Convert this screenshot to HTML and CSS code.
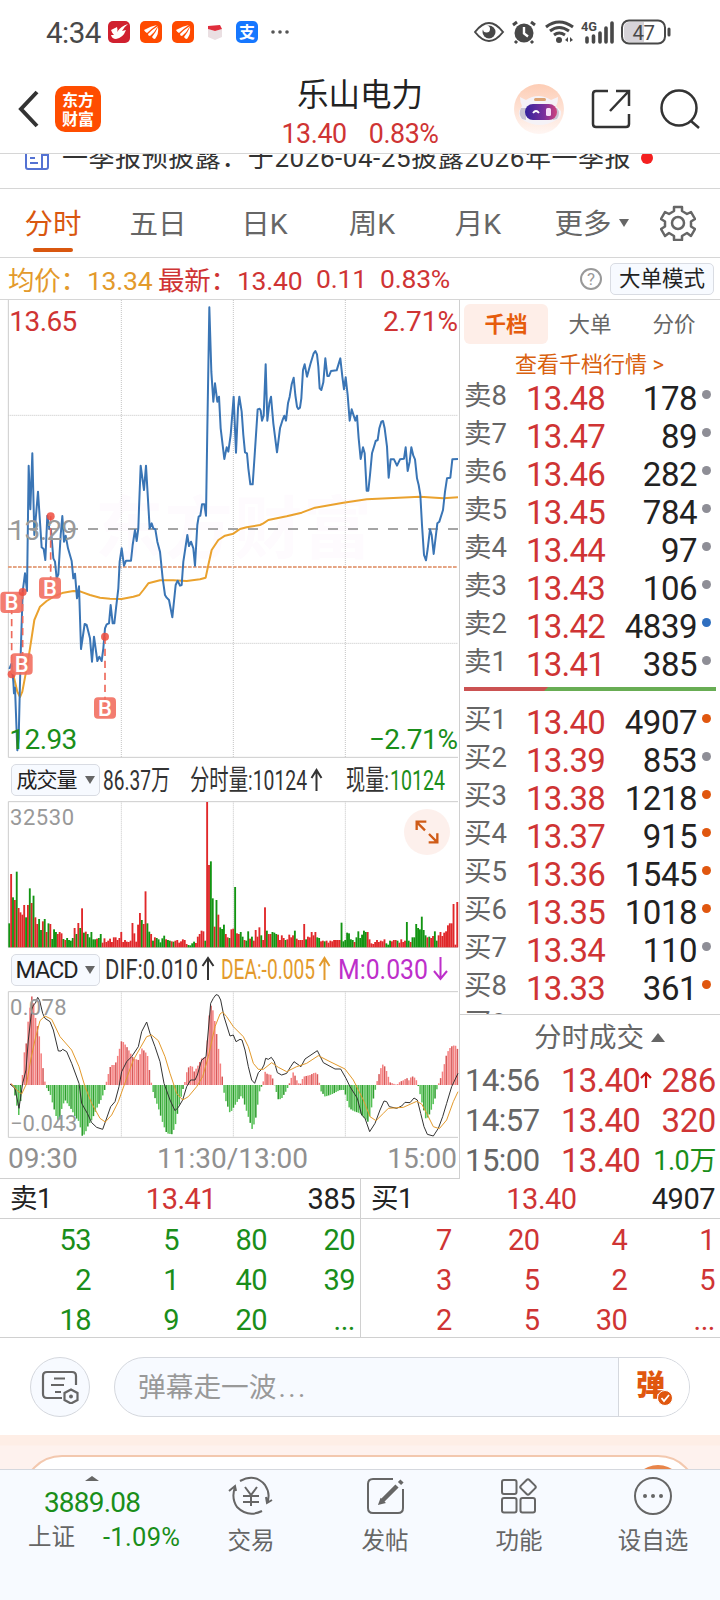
FILE: index.html
```html
<!DOCTYPE html>
<html lang="zh-CN">

<head>
    <meta charset="UTF-8">
    <meta name="viewport" content="width=device-width, initial-scale=1.0">
    <title>乐山电力</title>
    <link rel="stylesheet" href="styles.css">
</head>

<body>
    <div class="page">
        <div class="status">
            <span class="clock">4:34</span>
            <svg class="apps" width="182" height="24" viewBox="0 0 182 24">
                <rect x="0" y="1" width="22" height="22" rx="5" fill="#d0202f" />
                <path d="M3 10l6-3q1 3 0 5 4-6 11-8-4 3-6 7l4-1q-3 8-10 9-4 0-5-4l3 0q-2-2-3-5z" fill="#fff" />
                <rect x="32" y="1" width="22" height="22" rx="5" fill="#ff4a00" />
                <path d="M36 10q7-4 13-5-6 4-10 8-2-1-3-3zM40 14q5-5 10-8-3 6-8 10-2 0-2-2zM44 17q4-5 6-10 1 7-3 12-2 0-3-2z" fill="#fff" />
                <rect x="64" y="1" width="22" height="22" rx="5" fill="#ff4a00" />
                <path d="M68 10q7-4 13-5-6 4-10 8-2-1-3-3zM72 14q5-5 10-8-3 6-8 10-2 0-2-2zM76 17q4-5 6-10 1 7-3 12-2 0-3-2z" fill="#fff" />
                <path d="M100 9l7 2 7-2v8l-7 3-7-3z" fill="#eadfe2" />
                <path d="M100 6l12-1 2 4-7 2-7-2z" fill="#e02d3c" />
                <rect x="128" y="1" width="22" height="22" rx="5" fill="#1677ff" />
                <text x="139" y="18" text-anchor="middle" font-size="16" font-weight="700" fill="#fff">支</text>
                <g fill="#555">
                    <circle cx="165" cy="12" r="1.8" />
                    <circle cx="172" cy="12" r="1.8" />
                    <circle cx="179" cy="12" r="1.8" />
                </g>
            </svg>
            <svg class="signals" width="198" height="26" viewBox="0 0 198 26">
                <g fill="none" stroke="#484848" stroke-width="2">
                    <path d="M1 13Q8 4 15 4t14 9q-7 9-14 9T1 13z" />
                    <path d="M72 8q13-10 27 0M76 12q9-7 19 0M80 16q5-4 11 0" stroke-width="3" />
                    <rect x="148" y="1.500" width="43" height="23" rx="7" />
                </g>
                <circle cx="15" cy="13" r="6.500" fill="#484848" />
                <circle cx="12.500" cy="10" r="3.500" fill="#fff" />
                <circle cx="50" cy="14" r="9.500" fill="#484848" />
                <path d="M50 8v6.500l4 3" fill="none" stroke="#fff" stroke-width="2.400" />
                <path d="M39 6l4-3M57 3l4 3M43 22l-2 2M57 22l2 2" stroke="#484848" stroke-width="3" />
                <circle cx="85" cy="21" r="3" fill="#484848" />
                <path d="M91 21l3-3v5zM99 21l-3-3v5z" fill="#484848" />
                <text x="107" y="12" font-size="12.500" font-weight="700" textLength="16" lengthAdjust="spacingAndGlyphs" fill="#484848">4G</text>
                <path d="M113 23v-4M119.500 23v-6M126 23V14M132 23V9M138 23V4" stroke="#484848" stroke-width="3.600" stroke-linecap="round" />
                <path d="M155 3h15v20h-15q-5 0-5-6V9q0-6 5-6z" fill="#d6d3d8" />
                <text x="169.500" y="20.500" text-anchor="middle" font-size="20.500" letter-spacing="-.5" fill="#484848">47</text>
                <path d="M195 10v6" stroke="#484848" stroke-width="3" stroke-linecap="round" />
            </svg>
        </div>

        <div class="header">
            <svg class="back" width="22" height="38" viewBox="0 0 22 38">
                <path d="M20 2L4 19l16 17" fill="none" stroke="#333" stroke-width="4" />
            </svg>
            <div class="logo">东方<br>财富</div>
            <div class="title">
                <h1>乐山电力</h1>
                <p><span>13.40</span><span>0.83%</span></p>
            </div>
            <svg class="robot" width="50" height="50" viewBox="0 0 50 50">
                <defs>
                    <linearGradient id="halo" x1="0" y1="0" x2="0" y2="1">
                        <stop offset="0" stop-color="#fdcdb5" />
                        <stop offset="1" stop-color="#fff6f3" />
                    </linearGradient>
                    <linearGradient id="visor">
                        <stop offset="0" stop-color="#33229c" />
                        <stop offset=".6" stop-color="#7a2f9c" />
                        <stop offset="1" stop-color="#d0447c" />
                    </linearGradient>
                </defs>
                <circle cx="25" cy="25" r="25" fill="url(#halo)" />
                <path d="M6 13l6 3q12-8 25 0l7-3q0 6-2 9l5 5q1 7-5 9-16 10-33 0-5-2-4-9l3-5q-2-4-2-9z" fill="#f5f2f7" />
                <path d="M7 24q-3 6 1 11l4 1V24zM43 24q4 5 0 11l-4 1V24z" fill="#c9c4d2" />
                <rect x="20" y="14" width="12" height="3" rx="1.500" fill="#dba271" />
                <rect x="11" y="20" width="32" height="16" rx="8" fill="url(#visor)" />
                <path d="M19 29q3-4 6 0" fill="none" stroke="#fff" stroke-width="1.800" />
                <rect x="32" y="24" width="5" height="8" rx="1.500" fill="#f6dcf8" />
            </svg>
            <svg class="share" width="42" height="42" viewBox="0 0 42 42">
                <path d="M18 3H6Q3 3 3 6v30q0 3 3 3h30q3 0 3-3V26M20 23L38 4M26 3h13v15" fill="none" stroke="#333" stroke-width="2.500" />
            </svg>
            <svg class="search" width="42" height="42" viewBox="0 0 42 42">
                <g fill="none" stroke="#333" stroke-width="2.500">
                    <circle cx="20" cy="20" r="17.500" />
                    <path d="M32 33l8 7" />
                </g>
            </svg>
        </div>

        <div class="notice">
            <svg width="24" height="24" viewBox="0 0 24 24" fill="none" stroke="#5472d3" stroke-width="2">
                <path d="M1 1h16v22H3q-2 0-2-2zM17 9h6v12q0 2-2 2h-4M5 7h8M5 12h5M5 17h8" />
            </svg>
            <span>一季报预披露：于2026-04-25披露2026年一季报</span>
            <i></i>
        </div>

        <div class="tabs">
            <a class="active">分时</a>
            <a>五日</a>
            <a>日K</a>
            <a>周K</a>
            <a>月K</a>
            <a>更多<i class="down"></i></a>
            <svg width="36" height="36" viewBox="-18 -18 36 36" fill="none" stroke="#666" stroke-width="2.500" stroke-linejoin="round">
                <path d="M-4-16h8v4l5 3 4-2 4 7-4 2.500v5L17 6l-4 7-4-3-5 3v4h-8v-4l-5-3-4 3-4-7 4-2.500v-5L-17-4l4-7 4 2 5-3z" />
                <circle r="6" />
            </svg>
        </div>

        <div class="summary">
            <span class="avg">均价：13.34</span>
            <span class="last">最新：13.40</span>
            <span>0.11</span>
            <span>0.83%</span>
            <b class="help">?</b>
            <button>大单模式</button>
        </div>

        <div class="main">
            <div class="charts">
                <svg id="price" width="459" height="458" viewBox="0 15 1377 1374">
                    <text x="285" y="775" font-size="205" font-weight="700" textLength="830" fill="#fefbfe">东方财富</text>
                    <path class="grid" d="M364 15V1387M700 15V1387M1036 15V1387M25 361H1374M25 1045H1374" />
                    <path d="M25 15V1387H1374" class="frame" />
                    <path d="M24 702H1374" stroke="#888" stroke-width="5" stroke-dasharray="30" />
                    <path d="M24 816H1374" stroke="#e5a584" stroke-width="6" stroke-dasharray="11 4" />
                    <polyline class="avg-line" />
                    <polyline class="price-line" />
                    <g class="marks"></g>
                    <g font-size="84">
                        <text x="28" y="107" textLength="204" fill="#cf3434">13.65</text>
                        <text x="1374" y="107" text-anchor="end" fill="#cf3434">2.71%</text>
                        <text x="28" y="735" textLength="204" fill="#999">13.29</text>
                        <text x="28" y="1361" textLength="204" fill="#1a8e1a">12.93</text>
                        <text x="1374" y="1361" text-anchor="end" textLength="268" fill="#1a8e1a">−2.71%</text>
                    </g>
                </svg>
                <div class="index">
                    <button>成交量<i class="down"></i></button>
                    <svg width="359" height="43" viewBox="100 758 359 43" font-size="28" fill="#333">
                        <text x="103" y="790" textLength="67" lengthAdjust="spacingAndGlyphs">86.37万</text>
                        <text x="190" y="790" textLength="117" lengthAdjust="spacingAndGlyphs">分时量:10124</text>
                        <path class="arrow" d="M316.500 791v-21M311.500 778l5-8 5 8" />
                        <text x="346" y="790" textLength="43" lengthAdjust="spacingAndGlyphs">现量:</text>
                        <text x="390" y="790" textLength="55" lengthAdjust="spacingAndGlyphs" fill="#1a8e1a">10124</text>
                    </svg>
                </div>
                <svg id="volume" width="459" height="147" viewBox="0 153 1377 441">
                    <path class="grid" d="M364 154V592M700 154V592M1036 154V592" />
                    <path class="frame" d="M1374 155H25V592H1374" />
                    <g class="bars"></g>
                    <text x="30" y="225" font-size="66" textLength="192" fill="#999">32530</text>
                    <circle cx="1281" cy="246" r="69" fill="#fdf0ec" />
                    <path d="M1275 241l-24-24M1250 240v-25h29M1287 252l25 25M1286 277h26v-27" fill="none" stroke="#cf5b17" stroke-width="7" />
                </svg>
                <div class="index">
                    <button class="latin">MACD<i class="down"></i></button>
                    <svg width="359" height="43" viewBox="100 948 359 43" font-size="28" fill="#333">
                        <text x="105" y="979" textLength="93" lengthAdjust="spacingAndGlyphs">DIF:0.010</text>
                        <path class="arrow" d="M208 980v-22M202.500 966l5.500-8 5.500 8" />
                        <text x="221" y="979" textLength="94" lengthAdjust="spacingAndGlyphs" fill="#e39a2c">DEA:-0.005</text>
                        <path class="arrow dea-arrow" d="M324.500 980v-22M319.500 966l5-8 5 8" />
                        <text x="338" y="979" textLength="90" lengthAdjust="spacingAndGlyphs" fill="#bd2fca">M:0.030</text>
                        <path class="arrow m-arrow" d="M440.500 957v22M434 971l6.500 8 6.500-8" />
                    </svg>
                </div>
                <svg id="macd" width="459" height="147" viewBox="0 723 1377 441">
                    <path class="grid" d="M364 724V1162M700 724V1162M1036 724V1162" />
                    <path class="frame" d="M1374 725H25V1162H1374" />
                    <g class="bars"></g>
                    <polyline class="dif" />
                    <polyline class="dea" />
                    <text x="30" y="795" font-size="66" textLength="170" fill="#999">0.078</text>
                    <text x="30" y="1143" font-size="66" textLength="202" fill="#999">−0.043</text>
                </svg>
                <div class="times"><span>09:30</span><span>11:30/13:00</span><span>15:00</span></div>
            </div>

            <div class="side">
                <div class="side-tabs"><a class="active">千档</a><a>大单</a><a>分价</a></div>
                <a class="more">查看千档行情 &gt;</a>
                <div class="book">
                    <div class="asks"></div>
                    <div class="ratio"></div>
                    <div class="bids"></div>
                </div>
                <div class="deals">
                    <h2>分时成交<i class="up"></i></h2>
                    <p><span>14:56</span><b>13.40</b><svg width="12" height="18" viewBox="0 0 12 18"><path d="M6 17V2M1 7l5-5 5 5" fill="none" stroke="#c81414" stroke-width="2.200" /></svg><em>286</em></p>
                    <p><span>14:57</span><b>13.40</b><em>320</em></p>
                    <p><span>15:00</span><b>13.40</b><em class="green">1.0万</em></p>
                </div>
            </div>
        </div>

        <div class="queues">
            <div class="queue sell">
                <p><span>卖1</span><b>13.41</b><em>385</em></p>
                <div class="lots">
                    <span>53</span><span>5</span><span>80</span><span>20</span>
                    <span>2</span><span>1</span><span>40</span><span>39</span>
                    <span>18</span><span>9</span><span>20</span><span>...</span>
                </div>
            </div>
            <div class="queue buy">
                <p><span>买1</span><b>13.40</b><em>4907</em></p>
                <div class="lots">
                    <span>7</span><span>20</span><span>4</span><span>1</span>
                    <span>3</span><span>5</span><span>2</span><span>5</span>
                    <span>2</span><span>5</span><span>30</span><span>...</span>
                </div>
            </div>
        </div>

        <div class="barrage">
            <div class="setting">
                <svg width="38" height="34" viewBox="0 0 38 34" fill="none" stroke="#666" stroke-width="2.200">
                    <path d="M21 28H6q-4 0-4-4V6q0-4 4-4h25q4 0 4 4v9M13 8.500h11M10 15h13M14 22h6" />
                    <path d="M30 19.500l6.500 3.500v7L30 33.500 23.500 30v-7z" />
                    <circle cx="30" cy="26.500" r="1.200" fill="#666" stroke-width="1.500" />
                </svg>
            </div>
            <div class="input">
                <span>弹幕走一波<i>...</i></span>
                <div class="send">弹
                    <svg width="16" height="16" viewBox="0 0 16 16">
                        <circle cx="8" cy="8" r="7.500" fill="#e0570f" stroke="#fff" />
                        <path d="M4.500 8l2.500 3 5-6" fill="none" stroke="#fff" stroke-width="1.800" />
                    </svg>
                </div>
            </div>
        </div>

        <div class="promo">
            <div class="card"><i></i></div>
        </div>

        <div class="nav">
            <div class="market">
                <i class="up"></i>
                <b>3889.08</b>
                <p><span>上证</span><em>-1.09%</em></p>
            </div>
            <a>
                <svg width="46" height="42" viewBox="0 0 46 42" fill="none" stroke="#666" stroke-width="2">
                    <path d="M12 6q15-8 25 4 6 9 2 18M34 36q-14 7-25-4-6-9-2-20M1 16l6-5 1 5M38 22l1 6 5-3" />
                    <path d="M17 12l6 8 6-8M15 21h16M15 27h16M23 20v11" />
                </svg>
                交易
            </a>
            <a>
                <svg width="42" height="42" viewBox="0 0 42 42" fill="none" stroke="#666" stroke-width="2">
                    <path d="M29 4H9q-5 0-5 5v24q0 5 5 5h25q5 0 5-5V14" />
                    <path d="M18 26l15-15M35.500 8.500L38 6" stroke-width="4.500" />
                    <path d="M15.500 28.500l1.500-4 3 3z" fill="#666" />
                </svg>
                发帖
            </a>
            <a>
                <svg width="42" height="42" viewBox="0 0 42 42" fill="none" stroke="#666" stroke-width="2">
                    <rect x="4" y="5" width="14.500" height="14" rx="2" />
                    <rect x="4" y="23" width="14.500" height="14.500" rx="2" />
                    <rect x="22.500" y="23" width="14.500" height="14.500" rx="2" />
                    <rect x="24" y="6" width="12" height="12" rx="2" transform="rotate(45 30 12)" />
                </svg>
                功能
            </a>
            <a>
                <svg width="42" height="42" viewBox="0 0 42 42" fill="none" stroke="#666" stroke-width="2">
                    <circle cx="21" cy="21" r="18" />
                    <path d="M13 21h.01M21 21h.01M29 21h.01" stroke-width="4" stroke-linecap="round" />
                </svg>
                设自选
            </a>
        </div>
    </div>

    <script src="chart.js"></script>
</body>

</html>
```
FILE: styles.css
```css
* {
    padding: 0;
    margin: 0;
    box-sizing: border-box;
}

body {
    font-family: Roboto, "Noto Sans CJK SC", sans-serif;
    color: #333;
    background: #fff;
}

svg {
    display: block;
    flex: none;
}

svg text {
    font-family: Roboto, "Noto Sans CJK SC", sans-serif;
}

b,
em,
i,
h1,
h2 {
    font-weight: 400;
    font-style: normal;
}

.page {
    width: 720px;
    height: 1600px;
    overflow: hidden;
    white-space: nowrap;
}

.down,
.up {
    display: inline-block;
    border: 5px solid transparent;
    border-top: 8px solid #666;
    border-bottom: 0;
}

.up {
    border: 7px solid transparent;
    border-bottom: 9px solid #666;
    border-top: 0;
}

.status {
    height: 64px;
    display: flex;
    align-items: center;
    padding-left: 46px;
}

.status .clock {
    flex: none;
    width: 62px;
    font-size: 29.5px;
    letter-spacing: -.5px;
    color: #484848;
    padding-top: 1px;
}

.status .signals {
    margin-left: 184px;
}

/* header */
.header {
    height: 90px;
    border-bottom: 1px solid #d6d6d6;
    display: flex;
    align-items: center;
    padding-left: 17px;
}

.header .logo {
    width: 46px;
    height: 46px;
    margin-left: 16px;
    border-radius: 10px;
    background: #ff4d00;
    color: #fff;
    font: 700 16px/19px "Noto Sans CJK SC", sans-serif;
    text-align: center;
    padding-top: 4px;
}

.header .title {
    width: 160px;
    margin-left: 179px;
    text-align: center;
}

.header h1 {
    font-size: 31.5px;
    line-height: 42px;
    color: #222;
    padding-top: 8px;
}

.header p {
    display: flex;
    justify-content: center;
    gap: 22px;
    font-size: 26.8px;
    line-height: 34px;
    letter-spacing: -.4px;
    color: #cf3434;
}

.header .robot {
    margin-left: 74px;
}

.header .share {
    margin-left: 26px;
}

.header .search {
    margin-left: 27px;
}

.notice {
    height: 35px;
    overflow: hidden;
    border-bottom: 1px solid #d6d6d6;
    display: flex;
    align-items: flex-start;
    padding-left: 25px;
}

.notice svg {
    margin-top: -8px;
}

.notice span {
    font-size: 26px;
    line-height: 38px;
    margin: -15px 0 0 13px;
    letter-spacing: .55px;
}

.notice i {
    width: 12px;
    height: 12px;
    margin: -2px 0 0 10px;
    border-radius: 50%;
    background: #f42020;
}

.tabs {
    height: 69px;
    border-bottom: 1px solid #d6d6d6;
    display: grid;
    grid-template-columns: 106px 104px 109px 106px 106px 104px 85px;
    place-items: center;
    font-size: 28.5px;
    color: #666;
}

.tabs a {
    height: 68px;
    line-height: 72px;
    position: relative;
}

.tabs a.active {
    color: #d9570f;
}

.tabs a.active::after {
    content: '';
    position: absolute;
    left: 9px;
    bottom: 5px;
    width: 40px;
    height: 4px;
    border-radius: 2px;
    background: #d9570f;
}

.tabs .down {
    position: absolute;
    left: 65px;
    top: 30px;
}

.summary {
    height: 42px;
    border-bottom: 1px solid #d6d6d6;
    display: flex;
    align-items: center;
    padding: 0 6px 0 8px;
    font-size: 26.5px;
    letter-spacing: -.2px;
    color: #cf3434;
}

.summary .avg {
    color: #e39a2c;
    width: 150px;
}

.summary .last {
    width: 158px;
}

.summary span:nth-child(3) {
    width: 64px;
}

.summary .help {
    width: 22px;
    height: 22px;
    margin-left: auto;
    margin-right: 8px;
    border: 2px solid #999;
    border-radius: 50%;
    font-size: 17px;
    line-height: 18px;
    text-align: center;
    color: #999;
}

.summary button,
.index button {
    height: 32px;
    border: 1px solid #d9dce3;
    border-radius: 5px;
    background: #f7faff;
    font-family: inherit;
    color: #222;
}

.summary button {
    width: 104px;
    font-size: 21.5px;
    line-height: 30px;
}

/* charts */
.main {
    height: 879px;
    display: flex;
    border-bottom: 1px solid #d0d0d0;
}

.charts {
    width: 459px;
}

.frame {
    fill: none;
    stroke: #ccc;
    stroke-width: 3;
}

.grid {
    fill: none;
    stroke: #c4c4c4;
    stroke-width: 3;
    stroke-dasharray: 3 3;
}

.charts polyline {
    fill: none;
    stroke-linejoin: round;
}

.price-line {
    stroke: #3a75b5;
    stroke-width: 6;
}

.avg-line {
    stroke: #eaa22e;
    stroke-width: 6;
}

.dif {
    stroke: #333;
    stroke-width: 3;
}

.dea {
    stroke: #e39a2c;
    stroke-width: 3;
}

.arrow {
    fill: none;
    stroke: #333;
    stroke-width: 2;
}

.dea-arrow {
    stroke: #e39a2c;
}

.m-arrow {
    stroke: #bd2fca;
}

.index {
    height: 43px;
    display: flex;
    align-items: center;
}

.index button {
    width: 89px;
    margin-left: 11px;
    font-size: 21px;
    line-height: 28px;
    letter-spacing: -1px;
    display: flex;
    align-items: center;
    justify-content: center;
    gap: 8px;
}

.index button.latin {
    font-size: 23.5px;
    letter-spacing: -1.2px;
}

.times {
    height: 40px;
    display: flex;
    justify-content: space-between;
    padding: 1px 2px 0 8px;
    font-size: 28px;
    line-height: 40px;
    color: #909090;
}

/* order book */
.side {
    flex: 1;
    border-left: 1px solid #d0d0d0;
    padding-left: 4px;
    color: #666;
}

.side-tabs {
    display: flex;
    margin-top: 4px;
    font-size: 21.5px;
    line-height: 42px;
    height: 40px;
    text-align: center;
}

.side-tabs a {
    width: 84px;
}

.side-tabs .active {
    border-radius: 6px;
    background: #feeee8;
    color: #e65c0c;
    font-weight: 700;
}

.more {
    display: block;
    margin-left: 51px;
    height: 34px;
    font-size: 22px;
    line-height: 42px;
    color: #d9610f;
}

.book {
    height: 636px;
    overflow: hidden;
}

.book p {
    height: 38px;
    display: flex;
    align-items: center;
    line-height: 38px;
    position: relative;
    top: 1px;
}

.book span {
    width: 62px;
    font-size: 27.5px;
    margin-top: -5px;
}

.book b,
.deals b {
    font-size: 33px;
    letter-spacing: -.8px;
    color: #cf3434;
    padding-top: 1px;
}

.book em {
    flex: 1;
    text-align: right;
    font-size: 33px;
    letter-spacing: -.5px;
    color: #222;
    padding-top: 1px;
}

.book i {
    width: 9px;
    height: 9px;
    margin: -7px 9px 0 5px;
    border-radius: 50%;
    background: #8e8e96;
}

.book i.blue {
    background: #2f6fc0;
}

.book i.orange {
    background: #e0570f;
}

.ratio {
    width: 252px;
    height: 4px;
    margin: 5px 0 11px;
    background: linear-gradient(135deg, #cb5252 59px, #68ad54 60px);
}

.deals {
    margin-left: -4px;
    border-top: 1px solid #d0d0d0;
    background: #fff;
}

.deals h2 {
    height: 45px;
    font-size: 27.5px;
    line-height: 45px;
    padding-left: 74px;
}

.deals .up {
    margin-left: 7px;
    vertical-align: 5px;
}

.deals p {
    height: 40px;
    line-height: 40px;
    display: flex;
    align-items: center;
    padding: 0 4px 0 5px;
}

.deals span {
    width: 96px;
    font-size: 31px;
    letter-spacing: -.5px;
    padding-top: 1px;
}

.deals em {
    margin-left: auto;
    font-size: 33px;
    letter-spacing: -.4px;
    color: #cf3434;
    padding-top: 1px;
}

.deals em.green {
    font-size: 27px;
    color: #1a8e1a;
}

/* queues */
.queues {
    height: 159px;
    display: flex;
    border-bottom: 1px solid #d0d0d0;
    font-size: 29px;
    letter-spacing: -.5px;
}

.queue {
    width: 360px;
}

.queue.buy {
    border-left: 1px solid #d0d0d0;
}

.queue p {
    height: 40px;
    line-height: 40px;
    border-bottom: 1px solid #d0d0d0;
    display: grid;
    grid-template-columns: 1fr 1fr 1fr;
    padding: 0 5px 0 10px;
    color: #222;
}

.queue p span {
    font-size: 27.5px;
}

.queue b {
    text-align: center;
    color: #cf3434;
    padding-right: 3px;
}

.queue em {
    text-align: right;
}

.lots {
    display: grid;
    grid-template-columns: repeat(4, 1fr);
    line-height: 40px;
    text-align: right;
    padding: 1px 5px 0 3px;
    color: #1a8e1a;
}

.buy .lots {
    color: #cf3434;
}

.barrage {
    height: 97px;
    display: flex;
    align-items: center;
    padding-left: 30px;
}

.setting {
    width: 60px;
    height: 60px;
    border: 1px solid #d5d8de;
    border-radius: 50%;
    background: #f7faff;
    display: flex;
    align-items: center;
    justify-content: center;
}

.input {
    width: 576px;
    height: 60px;
    margin-left: 24px;
    border: 1px solid #d5d8de;
    border-radius: 30px;
    background: #f7faff;
    overflow: hidden;
    display: flex;
    justify-content: space-between;
    padding-left: 23px;
    font-size: 27.7px;
    line-height: 60px;
    color: #999;
}

.input i {
    letter-spacing: 2.5px;
    padding-left: 2px;
}

.send {
    width: 71px;
    border-left: 1px solid #d5d8de;
    background: #fff;
    position: relative;
    padding-left: 17px;
    font-size: 29px;
    line-height: 57px;
    font-weight: 900;
    color: #e0570f;
}

.send svg {
    position: absolute;
    left: 38px;
    top: 32px;
}

.promo {
    height: 34px;
    overflow: hidden;
    padding: 20px 22px 0;
    background: linear-gradient(#feeee6 10px, #fef2ee 11px);
}

.card {
    height: 90px;
    border: 2px solid #f3c8ae;
    border-radius: 40px;
    background: #fff;
    overflow: hidden;
}

.card i {
    display: block;
    width: 52px;
    height: 52px;
    margin: 8px 12px 0 auto;
    border-radius: 50%;
    background: #e8854a;
}

.nav {
    height: 131px;
    border-top: 1px solid #d5d8de;
    background: #f7faff;
    display: flex;
    color: #666;
    font-size: 23.5px;
}

.nav a {
    width: 134px;
    display: flex;
    flex-direction: column;
    align-items: center;
    line-height: 34px;
    padding-top: 5px;
}

.nav a svg {
    margin-bottom: 7px;
}

.market {
    width: 184px;
    display: flex;
    flex-direction: column;
    align-items: center;
    color: #1a8e1a;
}

.market .up {
    margin-top: 6px;
    border-bottom-width: 5px;
}

.market b {
    font-size: 28px;
    line-height: 38px;
    letter-spacing: -.8px;
    margin-top: 3px;
}

.market p {
    width: 100%;
    display: flex;
    padding-left: 28px;
    line-height: 30px;
}

.market span {
    width: 75px;
    color: #666;
}

.market em {
    font-size: 25.5px;
    letter-spacing: .3px;
}
```
FILE: chart.js
```js
const $ = s => document.querySelector(s)

// chart coordinates are in thirds of a pixel
const STEP = 5.6
const START = 28

$('.price-line').setAttribute('points', `
28,1122 35,1105 40,1160 42,1195 45,1178 52,1366 56,1330 62,1080 68,890 75,835 81,888 86,512 91,643 97,475 103,720
114,590 125,757 131,762 136,795 142,662 148,700 153,705 160,790 165,800 170,850 175,838 182,720 187,663 192,740 197,722
204,760 215,798 220,850 225,836 231,910 237,874 243,1062 254,987 260,990 270,1030 276,1100 282,1025 292,1098 298,1085
305,1098 310,1060 315,1000 320,988 327,985 332,930 338,985 343,985 348,940 355,880 359,800 365,760 372,812 378,797
393,797 398,750 405,705 410,738 415,700 417,640 422,512 432,585 438,512 449,700 455,685 460,700 466,703 472,740
480,770 488,850 495,900 500,908 507,915 517,967 527,870 533,857 540,872 545,870 550,800 562,720 567,753 573,740
580,760 585,812 592,690 596,665 601,662 606,628 613,628 618,662 622,400 628,37 634,230 640,320 645,265 652,320
657,305 662,400 673,492 680,457 685,470 692,420 701,305 708,473 714,340 718,305 725,350 730,420 735,472 741,475
745,520 751,568 758,568 764,480 773,343 779,341 782,347 786,377 791,362 797,208 802,377 808,325 813,305 820,385
831,472 840,400 847,377 853,362 858,377 864,325 869,305 875,268 881,248 886,300 891,335 895,342 900,338 904,310
909,225 914,208 921,245 931,208 941,175 946,168 951,178 955,215 959,280 964,285 970,262 976,190 982,243 987,243
993,228 1010,226 1021,190 1027,245 1032,283 1037,247 1043,300 1049,377 1055,343 1066,377 1071,362 1076,430
1082,492 1089,457 1094,475 1100,587 1105,587 1110,540 1116,475 1122,455 1127,438 1133,435 1138,400 1144,380
1149,378 1154,400 1161,455 1166,548 1172,493 1182,493 1191,512 1200,493 1212,491 1217,457 1223,528 1229,500
1234,457 1240,482 1245,493 1251,550 1256,570 1261,600 1266,690 1272,780 1278,796 1283,762 1290,703 1295,720
1301,777 1306,735 1312,685 1318,680 1329,645 1335,590 1341,550 1351,548 1357,493 1374,492`)

$('.avg-line').setAttribute('points', `
40,1140 45,1160 52,1190 60,1206 67,1190 80,1120 90,1060 103,975 120,935 140,918 165,903 190,893 220,888 240,889
270,900 300,908 330,911 365,912 400,905 418,900 430,885 445,865 480,856 520,856 560,858 600,853 617,848 625,810
635,765 655,735 675,722 700,716 720,702 740,697 780,690 790,685 805,675 860,664 905,653 945,638 1030,623 1100,613
1180,609 1260,605 1330,610 1374,607`)

$('.dif').setAttribute('points', `
30,1002 45,1015 57,1075 68,1000 78,960 85,870 95,780 100,765 106,760 113,742 119,752 128,790 135,805 150,815 160,840
175,903 183,903 188,898 200,905 215,940 237,1000 245,1060 262,1090 275,1118 290,1132 308,1138 318,1110 332,1070
345,1055 357,1010 365,965 380,935 395,920 415,890 425,845 440,816 450,850 465,890 480,935 492,1000 510,1050 525,1082
535,1072 548,1050 560,1010 572,990 585,990 592,975 605,930 618,920 625,840 632,760 640,745 648,734 655,736 662,750
672,800 690,858 700,855 708,875 720,868 726,870 735,900 745,950 755,990 764,1000 775,968 785,958 792,945 797,925
805,928 814,922 823,935 832,968 845,975 860,970 872,950 882,935 903,950 915,927 952,902 970,938 1005,957 1022,957
1038,985 1050,1010 1072,1045 1085,1095 1095,1105 1109,1145 1125,1120 1140,1080 1152,1053 1160,1055 1168,1070
1190,1075 1205,1068 1215,1057 1230,1058 1242,1044 1252,1050 1262,1090 1272,1130 1282,1153 1300,1158 1315,1135
1328,1100 1340,1060 1355,1010 1374,970`)

$('.dea').setAttribute('points', `
35,1002 50,1020 65,1032 80,1000 92,930 105,870 120,812 135,798 155,808 180,860 215,900 237,950 255,1010 275,1060
300,1105 316,1116 335,1095 355,1055 378,990 400,930 420,895 440,860 455,855 475,872 495,920 510,970 530,1030 548,1050
565,1040 590,1010 608,980 625,920 645,830 660,792 668,786 680,800 700,830 730,860 745,890 760,940 775,958 790,958
815,938 835,952 860,965 890,950 920,940 955,917 990,935 1035,957 1060,990 1090,1050 1110,1100 1128,1112 1150,1090
1165,1075 1210,1072 1250,1054 1265,1062 1280,1090 1300,1130 1318,1136 1340,1110 1360,1055 1374,1025`)

// buy marks: box x, box y, dot x, dot y
const marks = [[34, 922, 35, 1138], [65, 1107, 68, 891], [150, 879, 152, 664], [315, 1239, 315, 1025]]
$('.marks').innerHTML = marks.map(([x, y, dx, dy]) => `
    <path d="M${dx} ${dy}V${y}" stroke="#ee6a5c" stroke-width="5" stroke-dasharray="22 14" />
    <circle cx="${dx}" cy="${dy}" r="12" fill="#ef4c3e" opacity=".85" />
    <rect x="${x - 33}" y="${y - 32}" width="66" height="64" rx="12" fill="#f26f60" opacity=".9" />
    <text x="${x}" y="${y + 23}" text-anchor="middle" font-size="66" font-weight="500" fill="#fff">B</text>`).join('')

const volumes = `72g 220r 150g 142r 227g 118r 105r 98r 127r 90g 127r 177g 133r 155g 90r 70r 85g 52g 78r 85g 46r 72g 70r 25g
54g 46g 40r 46r 42r 25g 22r 28g 22g 20g 28g 58r 40g 73r 58g 117r 44g 47r 40g 30g 46g 24g 24g 26r 28g 40g 14r 27r 16r 20r
26r 16r 30r 30r 22r 28r 46r 16r 22r 17r 16r 20r 73r 42r 17r 68r 103r 82g 70r 168r 72g 47g 40r 20g 30r 28g 24g 15g 27g
35g 24r 22g 20g 18r 17g 20r 22r 14r 18r 24r 22r 10r 7g 6g 12g 17g 13r 32r 40r 50r 48r 20g 436r 247r 258g 147g 62r 142g
98r 60g 55g 68g 40r 30r 28g 54r 56r 181g 42r 40r 46g 32g 22r 20g 48g 26r 32g 20r 52r 32r 60r 36g 22r 120r 50g 40r 40r
46g 44g 40g 38r 22r 36r 28r 22g 24r 38r 30r 36r 50g 26r 22r 22r 22r 70r 24g 32r 30r 46r 36r 46r 30g 28g 18r 20r 18g 20r
14r 20r 18r 22r 22r 22r 22r 74g 18g 22g 44g 42g 24g 22g 16r 30g 48g 28g 38g 50g 46g 46r 24r 12r 10r 16r 22r 16r 20r 18r
24r 12g 8g 20g 18r 22r 22r 20g 14r 24r 16r 20r 76g 20g 16r 30g 30g 70g 58g 54g 92g 52g 36g 30r 32g 28r 34r 48g 20g 36r
46r 34r 44r 48r 66r 72r 72r 130r 8r 136r`.split(/\s+/)
$('#volume .bars').innerHTML = volumes.map((v, i) => {
    const h = parseInt(v)
    return `<rect x="${(START - 3 + i * STEP).toFixed(1)}" y="${592 - h}" width="5.6" height="${h}" fill="${v.endsWith('r') ? '#e0282a' : '#129412'}" />`
}).join('')

// key points of the histogram, the bars between are interpolated
const hist = `28,0 34,5 40,-5 50,-60 56,-90 62,-45 66,0 68,50 74,110 80,130 86,220 92,240 97,280 103,225 108,190 114,170
120,130 125,75 132,30 136,-3 150,-25 160,-65 170,-100 178,-110 186,-65 195,-45 205,-60 215,-75 225,-95 237,-110 247,-155
255,-145 265,-120 275,-105 290,-70 305,-40 317,-5 320,15 332,60 345,60 355,95 365,135 380,115 400,80 415,75 425,110
435,100 442,90 452,15 460,-25 475,-70 490,-120 500,-145 515,-148 525,-125 535,-70 548,-15 556,15 562,50 575,60 582,40
592,55 605,80 618,85 625,180 630,245 640,220 650,150 660,70 670,0 673,-35 690,-85 705,-60 725,-30 740,-80 757,-135
768,-95 778,-20 786,0 791,15 797,50 801,33 815,30 820,10 826,-10 835,-45 845,-40 860,-15 868,5 880,40 892,10 900,0
910,25 930,30 945,38 955,30 960,-15 975,-35 995,-28 1020,-15 1032,-15 1048,-70 1060,-78 1080,-85 1105,-112 1118,-50
1128,-3 1133,20 1142,50 1150,65 1160,40 1170,8 1190,0 1200,10 1212,15 1220,22 1225,12 1235,27 1247,20 1255,-5 1265,-50
1278,-105 1290,-85 1305,-40 1312,-5 1320,15 1330,50 1340,95 1352,115 1365,120 1374,105`.split(/\s+/).map(p => p.split(',').map(Number))
const histAt = x => {
    const k = Math.max(1, hist.findIndex(p => p[0] >= x))
    const [a, b] = [hist[k - 1], hist[k]]
    return a[1] + (b[1] - a[1]) * (x - a[0]) / (b[0] - a[0])
}
let bars = ''
for (let i = 0; i <= 240; i++) {
    const x = START + i * STEP
    const h = histAt(x)
    const color = h > 0 ? (i % 3 ? '#f58080' : '#d65a5a') : (i % 3 ? '#55c055' : '#2e9c2e')
    bars += `<rect x="${(x - 2).toFixed(1)}" y="${Math.min(1005, 1005 - h).toFixed(1)}" width="4.6" height="${Math.abs(h).toFixed(1)}" fill="${color}" />`
}
$('#macd .bars').innerHTML = bars

const row = ([name, price, count, dot = '']) =>
    `<p><span>${name}</span><b>${price}</b><em>${count}</em><i class="${dot}"></i></p>`
$('.asks').innerHTML = [
    ['卖8', '13.48', 178], ['卖7', '13.47', 89], ['卖6', '13.46', 282], ['卖5', '13.45', 784],
    ['卖4', '13.44', 97], ['卖3', '13.43', 106], ['卖2', '13.42', 4839, 'blue'], ['卖1', '13.41', 385]
].map(row).join('')
$('.bids').innerHTML = [
    ['买1', '13.40', 4907, 'orange'], ['买2', '13.39', 853], ['买3', '13.38', 1218, 'orange'],
    ['买4', '13.37', 915, 'orange'], ['买5', '13.36', 1545, 'orange'], ['买6', '13.35', 1018, 'orange'],
    ['买7', '13.34', 110], ['买8', '13.33', 361, 'orange'], ['买9', '13.32', 200]
].map(row).join('')
```
